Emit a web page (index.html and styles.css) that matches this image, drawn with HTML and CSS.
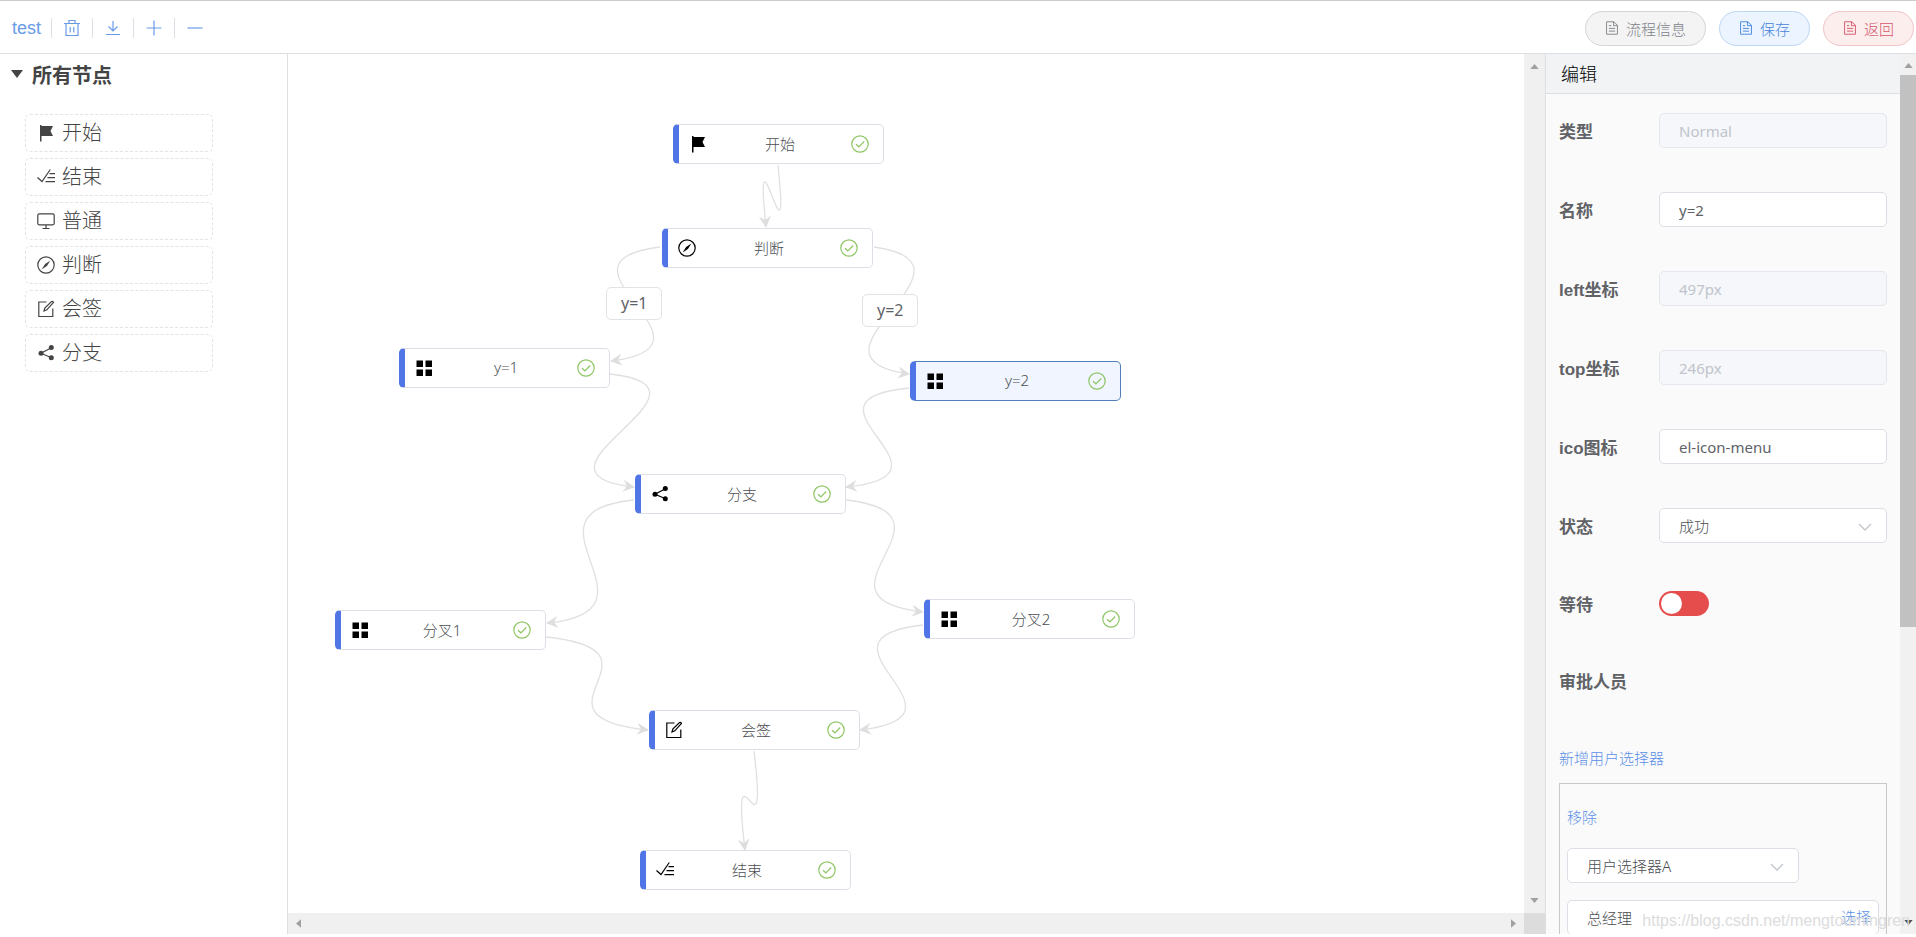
FILE: index.html
```html
<!DOCTYPE html>
<html lang="zh-CN">
<head>
  <meta charset="UTF-8">
  <title>test</title>
  <link rel="stylesheet" href="styles.css">
</head>
<body>

  <!-- icon set -->
  <svg class="sprite" aria-hidden="true">
    <symbol id="i-delete" viewBox="0 0 18 18"><path d="M1 4.5h16M6 4V1.5h6V4M3 4.5v12h12v-12M7.2 8v5.5M10.8 8v5.5"/></symbol>
    <symbol id="i-download" viewBox="0 0 18 18"><path d="M9 2v9.5M4.5 7.5 9 12l4.500-4.500M2 15.500h14"/></symbol>
    <symbol id="i-plus" viewBox="0 0 18 18"><path d="M9 1.500v15M1.500 9h15"/></symbol>
    <symbol id="i-minus" viewBox="0 0 18 18"><path d="M1.500 9h15"/></symbol>
    <symbol id="i-document" viewBox="0 0 18 18"><path d="M2 1h9.500L16 5.500V17H2zM11 1v5h5M5 6h3M5 9.500h8M5 13h8"/></symbol>
    <symbol id="i-flag" viewBox="0 0 18 18"><path class="solid" d="M3 1h1.500v1H16l-2.500 5 2.500 5H4.500v5.500H3z"/></symbol>
    <symbol id="i-finished" viewBox="0 0 18 18"><path d="M.5 9.500 5 13.500 13.300 1.500M12.500 5.600H18M10.500 9.600H18M8.500 13.600H18"/></symbol>
    <symbol id="i-monitor" viewBox="0 0 18 18"><rect x=".8" y="1.800" width="16.400" height="11" rx="1.500"/><path d="M9 13v3M5.500 16.500h7"/></symbol>
    <symbol id="i-discover" viewBox="0 0 18 18"><circle cx="9" cy="9" r="8.200"/><path class="solid" d="M13.400 4.600 9.900 9.900 4.600 13.400 8.100 8.100z"/></symbol>
    <symbol id="i-edit" viewBox="0 0 18 18"><path d="M9.500 2H1.800v14.500h14V8.500"/><path d="m7 11 .8-3L14.500 1.500q1.300-.5 2 1L9.800 9.800z"/></symbol>
    <symbol id="i-share" viewBox="0 0 18 18"><path d="M14 4 4 9.200 14 13.500"/><circle class="solid" cx="14.300" cy="3.500" r="2.500"/><circle class="solid" cx="4" cy="9.200" r="2.500"/><circle class="solid" cx="14.300" cy="13.800" r="2.500"/></symbol>
    <symbol id="i-menu" viewBox="0 0 18 18"><path class="solid" d="M1.500 1.500h6.500v6.500H1.500zM10.500 1.500H17v6.500h-6.500zM1.500 10.500h6.500V17H1.500zM10.500 10.500H17V17h-6.500z"/></symbol>
    <symbol id="i-check" viewBox="0 0 18 18"><circle cx="9" cy="9" r="8.200"/><path d="m5 9.200 2.900 2.600 5.300-5.300"/></symbol>
    <symbol id="i-arrow" viewBox="0 0 10 6"><path class="solid" d="M0 6 5 0l5 6z"/></symbol>
  </svg>

  <header class="toolbar">
    <a href="#" class="flow-name">test</a>
    <button class="tool" aria-label="删除"><svg class="icon"><use href="#i-delete"/></svg></button>
    <button class="tool" aria-label="下载"><svg class="icon"><use href="#i-download"/></svg></button>
    <button class="tool" aria-label="放大"><svg class="icon"><use href="#i-plus"/></svg></button>
    <button class="tool" aria-label="缩小"><svg class="icon"><use href="#i-minus"/></svg></button>
    <div class="actions">
      <button class="btn btn-info"><svg class="icon"><use href="#i-document"/></svg>流程信息</button>
      <button class="btn btn-primary"><svg class="icon"><use href="#i-document"/></svg>保存</button>
      <button class="btn btn-danger"><svg class="icon"><use href="#i-document"/></svg>返回</button>
    </div>
  </header>

  <div class="main">
    <aside class="sidebar">
      <h3 class="menu-title"><span class="caret"></span>所有节点</h3>
      <ul class="menu">
        <li><svg class="icon"><use href="#i-flag"/></svg>开始</li>
        <li><svg class="icon"><use href="#i-finished"/></svg>结束</li>
        <li><svg class="icon"><use href="#i-monitor"/></svg>普通</li>
        <li><svg class="icon"><use href="#i-discover"/></svg>判断</li>
        <li><svg class="icon"><use href="#i-edit"/></svg>会签</li>
        <li><svg class="icon"><use href="#i-share"/></svg>分支</li>
      </ul>
    </aside>

    <div class="canvas-wrap">
      <div class="canvas">
        <svg class="lines">
          <defs>
            <marker id="head" viewBox="0 0 12 12" refX="11" refY="6" markerWidth="12" markerHeight="12" markerUnits="userSpaceOnUse" orient="auto">
              <path d="M0 0 12 6 0 12 4 6z"/>
            </marker>
          </defs>
          <path d="M490 111C503 236 465 48 478 173"/>
          <path d="M372 193C248 208 447 292 323 307"/>
          <path d="M586 193C709 210 498 303 621 320"/>
          <path d="M322 320C449 334 219 419 346 433"/>
          <path d="M621 334C495 346 684 421 558 433"/>
          <path d="M346 446C220 458 385 557 259 569"/>
          <path d="M558 446C684 460 509 544 635 558"/>
          <path d="M258 583C391 597 227 662 360 676"/>
          <path d="M635 571C509 585 698 662 572 676"/>
          <path d="M466 697C481 822 442 671 457 796"/>
        </svg>

        <div class="node node-start"><svg class="icon"><use href="#i-flag"/></svg><span>开始</span><svg class="icon ok"><use href="#i-check"/></svg></div>
        <div class="node node-judge"><svg class="icon"><use href="#i-discover"/></svg><span>判断</span><svg class="icon ok"><use href="#i-check"/></svg></div>
        <div class="node node-y1"><svg class="icon"><use href="#i-menu"/></svg><span>y=1</span><svg class="icon ok"><use href="#i-check"/></svg></div>
        <div class="node node-y2 active"><svg class="icon"><use href="#i-menu"/></svg><span>y=2</span><svg class="icon ok"><use href="#i-check"/></svg></div>
        <div class="node node-branch"><svg class="icon"><use href="#i-share"/></svg><span>分支</span><svg class="icon ok"><use href="#i-check"/></svg></div>
        <div class="node node-fork1"><svg class="icon"><use href="#i-menu"/></svg><span>分叉1</span><svg class="icon ok"><use href="#i-check"/></svg></div>
        <div class="node node-fork2"><svg class="icon"><use href="#i-menu"/></svg><span>分叉2</span><svg class="icon ok"><use href="#i-check"/></svg></div>
        <div class="node node-sign"><svg class="icon"><use href="#i-edit"/></svg><span>会签</span><svg class="icon ok"><use href="#i-check"/></svg></div>
        <div class="node node-end"><svg class="icon"><use href="#i-finished"/></svg><span>结束</span><svg class="icon ok"><use href="#i-check"/></svg></div>

        <div class="line-label label-y1">y=1</div>
        <div class="line-label label-y2">y=2</div>
      </div>
      <div class="bar-v"><svg class="arrow"><use href="#i-arrow"/></svg><svg class="arrow down"><use href="#i-arrow"/></svg></div>
      <div class="bar-h"><svg class="arrow left"><use href="#i-arrow"/></svg><svg class="arrow right"><use href="#i-arrow"/></svg></div>
      <div class="bar-corner"></div>
    </div>

    <aside class="panel">
      <div class="panel-body">
        <div class="panel-title">编辑</div>
        <form class="form">
          <div class="row"><label for="type">类型</label><input type="text" id="type" value="Normal" disabled></div>
          <div class="row"><label for="name">名称</label><input type="text" id="name" value="y=2"></div>
          <div class="row"><label for="left">left坐标</label><input type="text" id="left" value="497px" disabled></div>
          <div class="row"><label for="top">top坐标</label><input type="text" id="top" value="246px" disabled></div>
          <div class="row"><label for="ico">ico图标</label><input type="text" id="ico" value="el-icon-menu"></div>
          <div class="row">
            <label for="state">状态</label>
            <div class="select">
              <select id="state"><option>成功</option></select>
              <svg viewBox="0 0 14 8"><path d="m1 1 6 6 6-6"/></svg>
            </div>
          </div>
          <div class="row"><label for="wait">等待</label><input type="checkbox" id="wait" class="switch"></div>
          <div class="row"><span class="label">审批人员</span></div>
          <div class="row"><a href="#">新增用户选择器</a></div>
        </form>
        <div class="picker">
          <a href="#">移除</a>
          <div class="select">
            <select aria-label="用户选择器"><option>用户选择器A</option></select>
            <svg viewBox="0 0 14 8"><path d="m1 1 6 6 6-6"/></svg>
          </div>
          <div class="picker-user">
            <input type="text" aria-label="审批人" value="总经理">
            <a href="#">选择</a>
          </div>
        </div>
      </div>
      <div class="panel-bar">
        <svg class="arrow"><use href="#i-arrow"/></svg>
        <div class="thumb"></div>
        <svg class="arrow down"><use href="#i-arrow"/></svg>
      </div>
      <div class="watermark">https://blog.csdn.net/mengtoumingren</div>
    </aside>
  </div>

</body>
</html>
```
FILE: styles.css
```css
* {
  box-sizing: border-box;
}
body {
  margin: 0;
  height: 100vh;
  display: flex;
  flex-direction: column;
  overflow: hidden;
  padding-bottom: 3px;
  background: #fff;
  color: #606266;
  font-family: "Noto Sans", "Noto Sans CJK SC", sans-serif;
  font-size: 15px;
}
a {
  color: #5b8fe6;
  font-weight: 300;
  text-decoration: none;
}
button, input, select {
  font: inherit;
}
.sprite {
  position: absolute;
  width: 0;
  height: 0;
}
.icon {
  width: 18px;
  height: 18px;
  flex: none;
  fill: none;
  stroke: currentColor;
  stroke-width: 1.2;
}
.solid {
  fill: currentColor;
  stroke: none;
}

/* toolbar */
.toolbar {
  height: 54px;
  flex: none;
  display: flex;
  align-items: center;
  border-top: 1px solid #ccc;
  border-bottom: 1px solid #dcdfe3;
  padding: 2px 2px 0 12px;
}
.flow-name {
  color: #6a9be8;
  font-family: "Liberation Sans", sans-serif;
  font-size: 18px;
  padding-right: 10px;
}
.tool {
  width: 41px;
  height: 20px;
  display: flex;
  align-items: center;
  justify-content: center;
  padding: 0;
  border: 0;
  border-left: 1px solid #dcdfe6;
  background: none;
  color: #6a9be8;
  cursor: pointer;
}
.actions {
  margin-left: auto;
  display: flex;
  gap: 13px;
}
.btn {
  height: 35px;
  display: flex;
  align-items: center;
  gap: 7px;
  padding: 0 19px;
  border: 1px solid;
  border-radius: 18px;
  font-weight: 300;
  cursor: pointer;
}
.btn .icon {
  width: 14px;
  height: 14px;
}
.btn-info {
  color: #808388;
  background: #f4f4f5;
  border-color: #d3d4d6;
}
.btn-primary {
  color: #4584dd;
  background: #ecf5ff;
  border-color: #bcd6f5;
}
.btn-danger {
  color: #d4566b;
  background: #fdeeee;
  border-color: #f0c4c8;
}

.main {
  flex: 1;
  display: flex;
  min-height: 0;
}

/* node list */
.sidebar {
  width: 288px;
  flex: none;
  border-right: 1px solid #dcdfe3;
}
.menu-title {
  display: flex;
  align-items: center;
  gap: 9px;
  height: 40px;
  margin: 0;
  padding-left: 11px;
  color: #444;
  font-size: 20px;
}
.caret {
  border: 6px solid transparent;
  border-top: 8px solid #444;
  border-bottom: 0;
}
.menu {
  list-style: none;
  margin: 0;
  padding: 20px 0 0 25px;
  display: flex;
  flex-direction: column;
  gap: 6px;
}
.menu li {
  width: 188px;
  height: 38px;
  display: flex;
  align-items: center;
  gap: 7px;
  padding-left: 11px;
  border: 1px dashed #e0e3e7;
  border-radius: 5px;
  color: #444;
  font-size: 20px;
  font-weight: 300;
  line-height: 36px;
}

/* canvas */
.canvas-wrap {
  flex: 1;
  min-width: 0;
  display: grid;
  grid-template: 1fr 21px / 1fr 21px;
}
.canvas {
  position: relative;
  overflow: hidden;
}
.lines {
  position: absolute;
  width: 100%;
  height: 100%;
  fill: none;
  stroke: #e0e0e0;
  stroke-width: 1.3;
}
.lines > path {
  marker-end: url(#head);
}
.lines marker path {
  fill: #dedede;
  stroke: none;
}
.node {
  position: absolute;
  width: 211px;
  height: 40px;
  display: flex;
  align-items: center;
  padding: 0 14px 0 10px;
  border: 1px solid #dcdfe6;
  border-left: 6px solid #5075e6;
  border-radius: 5px;
  background: #fff;
}
.node span {
  flex: 1;
  padding: 0 0 2px 2px;
  color: #4c4e52;
  font-weight: 300;
  text-align: center;
}
.node .icon {
  color: #000;
}
.node .ok {
  color: #8ec665;
}
.node.active {
  background: #f0f5ff;
  border-color: #5080b8;
  border-left-color: #5075e6;
}
.node-start { left: 385px; top: 70px; }
.node-judge { left: 374px; top: 174px; }
.node-y1 { left: 111px; top: 294px; }
.node-y2 { left: 622px; top: 307px; }
.node-branch { left: 347px; top: 420px; }
.node-fork1 { left: 47px; top: 556px; }
.node-fork2 { left: 636px; top: 545px; }
.node-sign { left: 361px; top: 656px; }
.node-end { left: 352px; top: 796px; }
.line-label {
  position: absolute;
  padding: 0 14px;
  border: 1px solid #e0e3e7;
  border-radius: 5px;
  background: #fff;
  font-size: 16px;
  line-height: 31px;
}
.label-y1 { left: 318px; top: 233px; }
.label-y2 { left: 574px; top: 240px; }

/* scroll bars */
.bar-v, .bar-h {
  display: flex;
  align-items: center;
  justify-content: space-between;
  background: #f0f0f0;
}
.bar-v {
  flex-direction: column;
  padding: 10px 0;
}
.bar-h {
  padding: 0 6px;
}
.bar-corner {
  background: #dcdcdc;
}
.arrow {
  width: 9px;
  height: 5px;
  flex: none;
  color: #a0a0a0;
}
.down {
  transform: rotate(180deg);
}
.left {
  transform: rotate(-90deg);
}
.right {
  transform: rotate(90deg);
}

/* edit panel */
.panel {
  position: relative;
  width: 371px;
  flex: none;
  display: flex;
  overflow: hidden;
  border-left: 1px solid #dcdfe3;
  background: #fafafa;
}
.panel-body {
  flex: 1;
  min-width: 0;
}
.panel-title {
  height: 40px;
  padding-left: 15px;
  border-bottom: 1px solid #dcdfe3;
  background: #f1f3f5;
  color: #000;
  font-size: 18px;
  font-weight: 300;
  line-height: 40px;
}
.form {
  display: flex;
  flex-direction: column;
  gap: 44px;
  padding: 19px 13px 0;
}
.row {
  display: flex;
  align-items: center;
  min-height: 33px;
}
.row label, .label {
  width: 100px;
  color: #606266;
  font-family: "Liberation Sans", "Noto Sans CJK SC", sans-serif;
  font-size: 17px;
  font-weight: bold;
}
input[type="text"], select {
  width: 100%;
  height: 35px;
  padding: 0 19px;
  border: 1px solid #dcdfe6;
  border-radius: 5px;
  background: #fff;
  color: #606266;
}
.row input[type="text"], .row .select {
  flex: 1;
  min-width: 0;
}
input[type="text"]:disabled {
  background: #f5f7fa;
  border-color: #e4e7ed;
  color: #c0c4cc;
}
.select {
  position: relative;
}
select, .picker-user input[type="text"] {
  appearance: none;
  color: #4c4e52;
  font-weight: 300;
}
.select svg {
  position: absolute;
  right: 15px;
  top: 15px;
  width: 14px;
  height: 8px;
  fill: none;
  stroke: #c0c4cc;
  stroke-width: 1.3;
}
.switch {
  appearance: none;
  width: 50px;
  height: 25px;
  margin: 0;
  padding: 2px;
  border-radius: 13px;
  background: #e54d4d;
}
.switch::before {
  content: "";
  display: block;
  width: 21px;
  height: 21px;
  border-radius: 50%;
  background: #fff;
}
.picker {
  display: flex;
  flex-direction: column;
  gap: 17px;
  height: 240px;
  margin: 9px 13px 0;
  padding: 19px 7px 0;
  border: 1px solid #c8c8c8;
}
.picker > a {
  line-height: 28px;
}
.picker .select {
  width: 232px;
}
.picker-user {
  position: relative;
}
.picker-user a {
  position: absolute;
  right: 8px;
  top: 0;
  line-height: 35px;
}
.panel-bar {
  width: 16px;
  flex: none;
  display: flex;
  flex-direction: column;
  align-items: center;
  padding: 9px 0;
  background: #f1f1f1;
}
.thumb {
  width: 100%;
  height: 64%;
  margin: 7px 0 auto;
  background: #c1c1c1;
}
.panel-bar .down {
  color: #505050;
}
.watermark {
  position: absolute;
  right: 6px;
  bottom: 4px;
  color: #dcdcdc;
  font-family: "Liberation Sans", sans-serif;
  font-size: 16px;
  pointer-events: none;
}
```
